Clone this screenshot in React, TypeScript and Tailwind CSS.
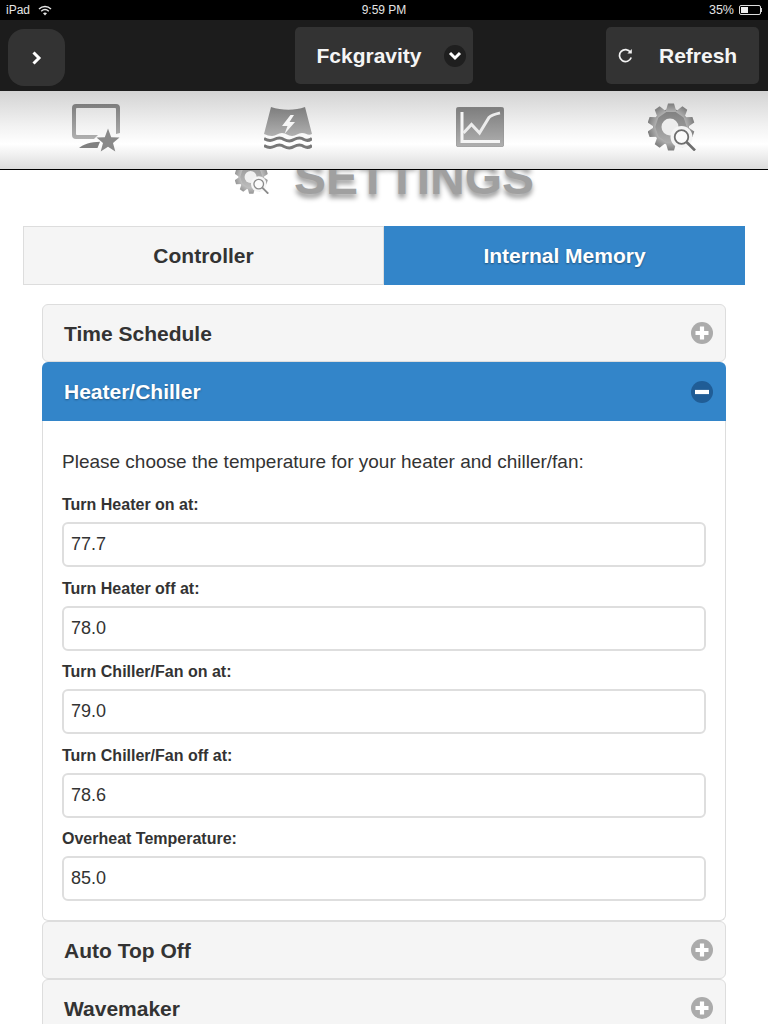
import React from "react";

const font = "font-['Liberation_Sans',Arial,sans-serif]";

function Grad({ id }: { id: string }) {
  return (
    <defs>
      <linearGradient id={id} x1="0" y1="0" x2="0" y2="1">
        <stop offset="0" stopColor="#7d7d7d" />
        <stop offset="1" stopColor="#b0b0b0" />
      </linearGradient>
    </defs>
  );
}

function MonitorIcon() {
  return (
    <svg width="48" height="48" viewBox="0 0 48 48">
      <Grad id="g1" />
      <path
        d="M4 0H44A4 4 0 0 1 48 4V29L44 30V5A1 1 0 0 0 43 4H5A1 1 0 0 0 4 5V30A1 1 0 0 0 5 31H26L22 35H4A4 4 0 0 1 0 31V4A4 4 0 0 1 4 0Z"
        fill="url(#g1)"
      />
      <path d="M7 44C11 40 19 38 28 37.7L25.5 44Z" fill="#808080" />
      <path
        d="M36 24.5L39.2 33.2L47.5 33.5L41 39L43.3 47.5L36 42.7L28.7 47.5L31 39L24.5 33.5L32.8 33.2Z"
        fill="#8a8a8a"
      />
    </svg>
  );
}

function WaveIcon() {
  return (
    <svg width="48" height="44" viewBox="0 0 48 44">
      <Grad id="g2" />
      <path
        d="M7 0C18 3.5 31 3.5 41 0L48 27C44 29 42 26 38 26C34 26 32 29 28 29C24 29 22 26 18 26C14 26 12 29 8 29C5 29 3 28 0 27Z"
        fill="url(#g2)"
      />
      <path d="M26.5 8L18 19H23.5L20.5 27L31 15H25.5L30 8Z" fill="#f6f6f6" />
      <path d="M0 31.5C4 34 7 34 10 32.5C14 30.5 17 30.5 20 32.5C24 34.5 27 34.5 30 32.5C34 30.5 37 30.5 40 32.5C43 34 45 34 48 31.5" fill="none" stroke="#777" strokeWidth="3" />
      <path d="M0 38.5C4 41 7 41 10 39.5C14 37.5 17 37.5 20 39.5C24 41.5 27 41.5 30 39.5C34 37.5 37 37.5 40 39.5C43 41 45 41 48 38.5" fill="none" stroke="#777" strokeWidth="3" />
    </svg>
  );
}

function ChartIcon() {
  return (
    <svg width="48" height="40" viewBox="0 0 48 40">
      <Grad id="g3" />
      <rect x="0" y="0" width="48" height="40" rx="3" fill="url(#g3)" stroke="#888" strokeWidth="0.5" />
      <path d="M6 5V34.5H44" fill="none" stroke="#f5f5f5" strokeWidth="3" />
      <path d="M7.5 26L15.5 17.5L23.5 26L33 10.5C36 7.5 39 7 44 6" fill="none" stroke="#ececec" strokeWidth="3" />
    </svg>
  );
}

function GearIcon({ size = 48, idp = "g4" }: { size?: number; idp?: string }) {
  const teeth = Array.from({ length: 10 }, (_, i) => i * 36);
  return (
    <svg width={size} height={size} viewBox="0 0 48 48">
      <Grad id={idp} />
      <g fill={`url(#${idp})`}>
        <circle cx="23" cy="24" r="18" />
        {teeth.map((a) => (
          <path key={a} d="M20 0.5H26L28.5 9H17.5Z" transform={`rotate(${a} 23 24)`} />
        ))}
      </g>
      <circle cx="22" cy="24" r="8.5" fill="#ededed" />
      <circle cx="33.5" cy="34" r="11" fill="#f4f4f4" />
      <circle cx="33.5" cy="34" r="6.8" fill="#fbfbfb" stroke="#6e6e6e" strokeWidth="1.8" />
      <path d="M38.5 39L47 47.5" stroke="#6e6e6e" strokeWidth="2.6" />
    </svg>
  );
}

function Wifi() {
  return (
    <svg width="14" height="11" viewBox="0 0 14 11" fill="none" stroke="#e5e5e5" strokeWidth="1.5">
      <path d="M1 4C4.5 0.8 9.5 0.8 13 4" />
      <path d="M3.2 6.2C5.4 4.3 8.6 4.3 10.8 6.2" />
      <path d="M7 10.5L5 8.2C6 7.3 8 7.3 9 8.2Z" fill="#e5e5e5" stroke="none" />
    </svg>
  );
}

function StatusBar() {
  return (
    <div className="grid h-5 grid-cols-3 items-center bg-black pl-1.5 pr-1.5 text-[12px] text-[#e4e4e4]">
      <div className="flex items-center gap-2">
        <span>iPad</span>
        <Wifi />
      </div>
      <div className="text-center">9:59 PM</div>
      <div className="flex items-center justify-end gap-[5px]">
        <span className="text-[12.5px]">35%</span>
        <div className="flex items-center">
          <div className="h-[10px] w-[22px] rounded-[2px] border border-[#ddd] p-px">
            <div className="h-full w-[7px] bg-[#eee]" />
          </div>
          <div className="h-1 w-px bg-[#ccc]" />
        </div>
      </div>
    </div>
  );
}

function HeaderBar() {
  return (
    <div className="grid h-[71px] grid-cols-3 items-start bg-[#1c1c1c] pl-2 pr-[9px] pt-[7px] text-[21px] font-bold text-[#f5f5f5]">
      <div className="flex">
        <button className="mt-[2px] flex h-[57px] w-[57px] items-center justify-center rounded-[16px] bg-[#333]">
          <svg width="12" height="14" viewBox="0 0 12 14" fill="none" stroke="#fff" strokeWidth="3">
            <path d="M2.5 1.5L8 7L2.5 12.5" />
          </svg>
        </button>
      </div>
      <div className="flex justify-center pl-[2px]">
        <button className="flex h-[57px] w-[178px] items-center justify-between rounded-[5px] bg-[#333] pl-[21px] pr-[7px]">
          <span>Fckgravity</span>
          <span className="flex h-[22px] w-[22px] items-center justify-center rounded-full bg-[#1f1f1f]">
            <svg width="14" height="10" viewBox="0 0 14 10" fill="none" stroke="#fff" strokeWidth="3">
              <path d="M2 2L7 7L12 2" />
            </svg>
          </span>
        </button>
      </div>
      <div className="flex justify-end">
        <button className="flex h-[57px] w-[153px] items-center rounded-[5px] bg-[#333] pl-[12px]">
          <svg width="15" height="15" viewBox="0 0 15 15" fill="none" stroke="#f2f2f2" strokeWidth="1.7">
            <path d="M12.5 4.2A6 6 0 1 0 13.2 9.5" />
            <path d="M13.8 1V5.4H9.4Z" fill="#f2f2f2" stroke="none" />
          </svg>
          <span className="ml-[26px]">Refresh</span>
        </button>
      </div>
    </div>
  );
}

function NavBar() {
  return (
    <div className="grid h-[79px] grid-cols-4 items-start border-b border-black bg-[linear-gradient(#d3d3d3_0%,#f2f2f2_45%,#ffffff_68%,#f4f4f4_78%,#dcdcdc_100%)]">
      <div className="flex justify-center pt-[13px]"><MonitorIcon /></div>
      <div className="flex justify-center pt-[16px]"><WaveIcon /></div>
      <div className="flex justify-center pt-[16px]"><ChartIcon /></div>
      <div className="flex justify-center pt-[12px]"><GearIcon /></div>
    </div>
  );
}

function Plus() {
  return (
    <svg width="22" height="22" viewBox="0 0 22 22">
      <circle cx="11" cy="11" r="11" fill="#ababab" />
      <path d="M11 4.5V17.5M4.5 11H17.5" stroke="#fff" strokeWidth="4.2" />
    </svg>
  );
}

function Minus() {
  return (
    <svg width="22" height="22" viewBox="0 0 22 22">
      <circle cx="11" cy="11" r="11" fill="#205d96" />
      <path d="M4 11H18" stroke="#fff" strokeWidth="4.2" />
    </svg>
  );
}

function Collapsed({ title }: { title: string }) {
  return (
    <div className="flex h-[58px] items-center justify-between rounded-[6px] border border-[#ddd] bg-[#f5f5f5] pl-[21px] pr-[12px] text-[21px] font-bold text-[#333]">
      <span className="mt-[2px]">{title}</span>
      <Plus />
    </div>
  );
}

function Field({ label, value }: { label: string; value: string }) {
  return (
    <div>
      <div className="h-[19px] text-[16px] leading-[19px] font-bold text-[#333]">{label}</div>
      <div className="mt-[8px] flex h-[45px] items-center rounded-[6px] border-2 border-[#dedede] bg-white pl-[7px] text-[18px] text-[#333]">
        {value}
      </div>
    </div>
  );
}

const fields = [
  ["Turn Heater on at:", "77.7"],
  ["Turn Heater off at:", "78.0"],
  ["Turn Chiller/Fan on at:", "79.0"],
  ["Turn Chiller/Fan off at:", "78.6"],
  ["Overheat Temperature:", "85.0"],
];

export default function App() {
  return (
    <div className={`${font} h-[1024px] w-[768px] overflow-hidden bg-white antialiased`}>
      <div className="relative z-10">
        <StatusBar />
        <HeaderBar />
        <NavBar />
      </div>

      <div className="flex h-[56px] items-start justify-center pl-[1px]">
        <div className="-mt-[17px] flex items-center">
          <div className="mr-[25px] -mt-[3px] opacity-80"><GearIcon size={34} idp="g5" /></div>
          <h1 className="text-[48px] leading-[50px] font-bold text-[#a0a0a0] [text-shadow:0_4px_5px_rgba(0,0,0,0.4)]">
            SETTINGS
          </h1>
        </div>
      </div>

      <div className="mx-[23px] grid h-[59px] grid-cols-2 text-[21px] font-bold">
        <div className="flex items-center justify-center border border-[#ddd] bg-[#f5f5f5] text-[#333]">Controller</div>
        <div className="flex items-center justify-center bg-[#3385c9] text-white [text-shadow:0_1px_2px_rgba(0,0,0,0.4)]">
          Internal Memory
        </div>
      </div>

      <div className="mx-[42px] mt-[19px]">
        <Collapsed title="Time Schedule" />
        <div className="flex h-[59px] items-center justify-between rounded-t-[6px] bg-[#3385c9] pl-[22px] pr-[13px] text-[21px] font-bold text-white [text-shadow:0_1px_2px_rgba(0,0,0,0.35)]">
          <span>Heater/Chiller</span>
          <Minus />
        </div>
        <div className="flex h-[500px] flex-col rounded-b-[6px] border border-t-0 border-[#ddd] bg-white px-[19px]">
          <p className="mt-[30px] h-[22px] text-[19px] leading-[22px] whitespace-nowrap text-[#333]">
            Please choose the temperature for your heater and chiller/fan:
          </p>
          <div className="mt-[22px] flex flex-col gap-[11.6px]">
            {fields.map(([l, v]) => (
              <Field key={l} label={l} value={v} />
            ))}
          </div>
        </div>
        <Collapsed title="Auto Top Off" />
        <Collapsed title="Wavemaker" />
      </div>
    </div>
  );
}
